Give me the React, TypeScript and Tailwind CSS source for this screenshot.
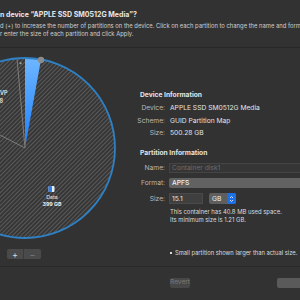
import React from "react";

const font = { fontFamily: "Inter, 'Liberation Sans', sans-serif" };

const PieChart: React.FC = () => (
  <svg width="140" height="196" viewBox="0 0 140 196" className="block">
    <defs>
      <pattern id="hatch" width="3" height="3" patternUnits="userSpaceOnUse" patternTransform="rotate(45)">
        <rect width="3" height="3" fill="#363636" />
        <rect width="1" height="3" fill="#5a5a5a" />
      </pattern>
      <linearGradient id="blue" x1="0" y1="0" x2="0" y2="1">
        <stop offset="0" stopColor="#6fb6ff" />
        <stop offset="1" stopColor="#1a7fff" />
      </linearGradient>
    </defs>
    <circle cx="25" cy="100" r="90" fill="url(#hatch)" />
    <line x1="25" y1="100" x2="17" y2="10.5" stroke="#8a8a8a" strokeWidth="0.8" />
    <line x1="25" y1="100" x2="-55" y2="58.5" stroke="#8a8a8a" strokeWidth="0.8" />
    <path d="M25,100 L25,10 A90,90 0 0 1 41,11.4 Z" fill="url(#blue)" />
    <circle cx="25" cy="100" r="90" fill="none" stroke="#2f80c4" strokeWidth="1.8" />
    <circle cx="41" cy="12" r="3.2" fill="#8c8c8c" />
    <text x="20.5" y="19" fontSize="6" fill="#cfcfcf" textAnchor="middle" style={font}>*</text>
    <text x="7.5" y="47" fontSize="5.5" fontWeight="600" fill="#e6e6e6" textAnchor="end" style={font}>VP</text>
    <text x="3" y="55" fontSize="5.5" fontWeight="600" fill="#e6e6e6" textAnchor="end" style={font}>8</text>
    <rect x="48.5" y="138" width="6" height="6" rx="1" fill="#e8eef8" />
    <rect x="48.5" y="138" width="3.5" height="6" rx="0.8" fill="#2f7fe6" />
    <text x="52" y="151" fontSize="5.3" fill="#e8e8e8" textAnchor="middle" style={font}>Data</text>
    <text x="52" y="158" fontSize="5.3" fontWeight="700" fill="#e8e8e8" textAnchor="middle" style={font}>399 GB</text>
  </svg>
);

const InfoRow: React.FC<{ label: string; value: string; className?: string }> = ({ label, value, className }) => (
  <div className={`flex items-center h-[12px] ${className ?? ""}`}>
    <span className="w-[25px] flex justify-end text-[#b8b8b8] whitespace-nowrap">{label}</span>
    <span className="ml-[5px] text-[#e4e4e4] whitespace-nowrap">{value}</span>
  </div>
);

export default function App() {
  return (
    <div
      className="w-[300px] h-[300px] bg-[#323232] overflow-hidden flex flex-col"
      style={font}
    >
      {/* header */}
      <div className="pt-[10px] pb-[9px] border-b border-[#282828] whitespace-nowrap overflow-hidden">
        <div className="text-[7px] leading-[9px] font-bold text-[#e6e6e6]">
          n device “APPLE SSD SM0512G Media”?
        </div>
        <div className="mt-[3px] text-[5.85px] leading-[8px] text-[#cfcfcf]">
          <div>d (+) to increase the number of partitions on the device. Click on each partition to change the name and format</div>
          <div>r enter the size of each partition and click Apply.</div>
        </div>
      </div>

      {/* main */}
      <div className="h-[219px] flex border-b border-[#292929]">
        <div className="w-[140px] flex flex-col">
          <PieChart />
          <div className="ml-[7px] mt-[5px] flex h-[10px] w-[34px] rounded-[2px] overflow-hidden bg-[#4a4a4a]">
            <div className="w-[17px] flex items-center justify-center text-[#d8d8d8] text-[9px] leading-none border-r border-[#3a3a3a]">+</div>
            <div className="w-[17px] flex items-center justify-center text-[#7a7a7a] text-[9px] leading-none">−</div>
          </div>
        </div>

        <div className="flex-1 flex flex-col pt-[43px] text-[6.7px] leading-[8px] whitespace-nowrap">
          <div className="h-[9px] font-bold text-[#e4e4e4]">Device Information</div>
          <InfoRow className="mt-[2px]" label="Device:" value="APPLE SSD SM0512G Media" />
          <InfoRow className="mt-[1px]" label="Scheme:" value="GUID Partition Map" />
          <InfoRow label="Size:" value="500.28 GB" />

          <div className="mt-[10px] h-[9px] font-bold text-[#e4e4e4]">Partition Information</div>
          <div className="mt-[4px] flex items-center h-[11px]">
            <span className="w-[25px] flex justify-end text-[#b8b8b8]">Name:</span>
            <div className="ml-[4px] flex-1 h-[10px] -mr-[10px] bg-[#363636] border border-[#444444] flex items-center px-[2px] text-[#6c6c6c]">
              Container disk1
            </div>
          </div>
          <div className="mt-[5px] flex items-center h-[10px]">
            <span className="w-[25px] flex justify-end text-[#b8b8b8]">Format:</span>
            <div className="ml-[4px] flex-1 h-[10px] -mr-[10px] bg-[#626262] rounded-[2px] flex items-center px-[3px] text-[#f0f0f0] font-medium">
              APFS
            </div>
          </div>
          <div className="mt-[5px] flex items-center h-[11px]">
            <span className="w-[25px] flex justify-end text-[#b8b8b8]">Size:</span>
            <div className="ml-[4px] w-[34px] h-[11px] bg-[#3f3f3f] border border-[#4a4a4a] flex items-center px-[2px] text-[#e8e8e8]">
              15.1
            </div>
            <div className="ml-[6px] w-[27px] h-[11px] bg-[#5e5e5e] rounded-[2px] flex items-center overflow-hidden">
              <span className="flex-1 pl-[3px] text-[#f0f0f0]">GB</span>
              <div className="w-[9px] h-full bg-[#1d6fe3] flex flex-col items-center justify-center">
                <svg width="5" height="8" viewBox="0 0 5 8">
                  <path d="M1,3 L2.5,1.5 L4,3 M1,5 L2.5,6.5 L4,5" stroke="#ffffff" strokeWidth="0.8" fill="none" />
                </svg>
              </div>
            </div>
          </div>
          <div className="mt-[4px] ml-[30px] text-[#dcdcdc] text-[5.9px] leading-[8px]">
            <div>This container has 40.8 MB used space.</div>
            <div>Its minimum size is 1.21 GB.</div>
          </div>
          <div className="mt-[25px] ml-[30px] flex items-center text-[#dcdcdc] text-[5.8px] leading-[8px]">
            <span className="w-[2px] h-[2px] bg-[#dcdcdc] mr-[3px] shrink-0" />
            Small partition shown larger than actual size.
          </div>
        </div>
      </div>

      {/* footer */}
      <div className="flex pt-[11px] pl-[170px] gap-[87px]">
        <div className="w-[35px] h-[10px] rounded-[2px] bg-[#474747] flex items-center justify-center text-[6.6px] text-[#7c7c7c]">
          Revert
        </div>
        <div className="w-[30px] h-[10px] rounded-[2px] bg-[#5a5a5a] shrink-0" />
      </div>
    </div>
  );
}
